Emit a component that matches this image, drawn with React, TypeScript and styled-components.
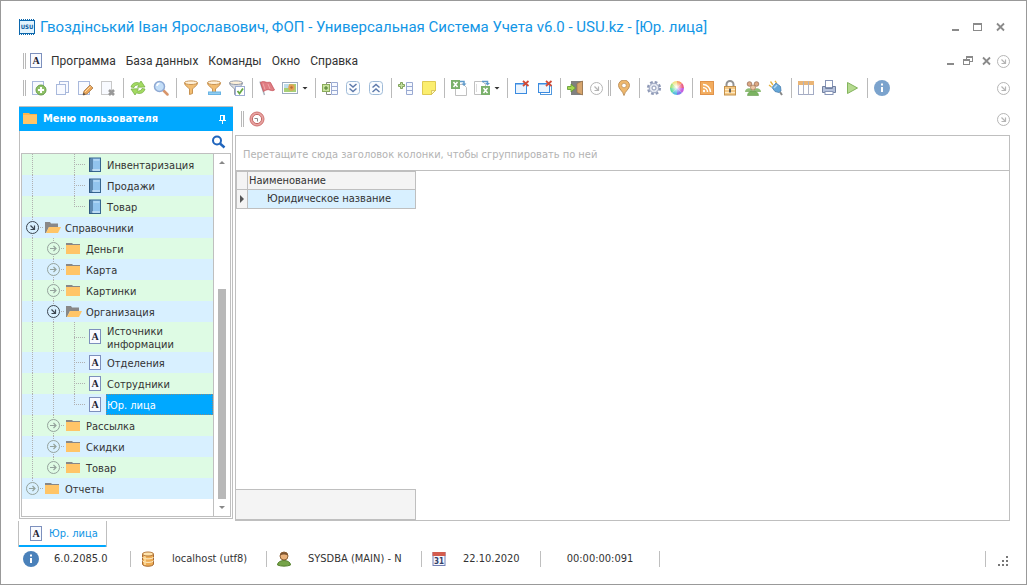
import React from "react";
import styled, { createGlobalStyle } from "styled-components";

const UI_FONT = '"DejaVu Sans Condensed", "DejaVu Sans", sans-serif';
const TITLE_FONT = 'Roboto, "Open Sans", sans-serif';
const LINE = "#bfbfbf";
const ACCENT = "#00a8ff";
const GREEN_ROW = "#defbe4";
const BLUE_ROW = "#d8f0ff";

const GlobalStyle = createGlobalStyle`
  * { box-sizing: border-box; }
  body { margin: 0; background: #fff; }
  button, input { font: inherit; color: inherit; }
`;

const Window = styled.div`
  display: flex;
  flex-direction: column;
  min-height: 100vh;
  border: 1px solid #999;
  background: #fff;
  color: #333;
  font: 11px/14px ${UI_FONT};
`;

const PlainButton = styled.button`
  display: flex;
  align-items: center;
  justify-content: center;
  flex: none;
  padding: 0;
  border: 0;
  background: none;
  cursor: pointer;
`;

/* Title bar */
const TitleBar = styled.header`
  display: flex;
  align-items: center;
  height: 48px;
  padding: 4px 21px 0 18px;
`;

const Title = styled.h1`
  flex: 1;
  min-width: 0;
  margin: 0 0 0 5px;
  overflow: hidden;
  white-space: nowrap;
  font: 400 15px/22px ${TITLE_FONT};
  color: #1296e6;
`;

const WindowButtons = styled.div<{ $gap: number }>`
  display: flex;
  align-items: center;
  gap: ${(p) => p.$gap}px;
`;

/* Menu bar */
const MenuBar = styled.nav`
  display: flex;
  align-items: center;
  height: 24px;
  padding: 0 16px 0 22px;
`;

const MenuIcon = styled.span`
  display: flex;
  margin-left: 4px;
`;

const MenuItems = styled.div`
  display: flex;
  gap: 10px;
  margin-left: 8px;
`;

const MenuItem = styled(PlainButton)`
  font: 12px/18px ${TITLE_FONT};
  color: #333;
`;

const MenuOptions = styled(PlainButton)`
  margin-left: 6px;
`;

const Grip = styled.span`
  flex: none;
  width: 3px;
  height: 16px;
  border: solid #b8b8b8;
  border-width: 0 1px;
`;

const Spacer = styled.span`
  flex: 1;
`;

/* Tool bar */
const ToolBar = styled.div`
  display: flex;
  align-items: center;
  height: 30px;
  padding: 0 16px 0 22px;
`;

const ToolSet = styled.div`
  display: flex;
  align-items: center;
  gap: 5px;
`;

const ToolList = styled.div`
  display: flex;
  align-items: center;
`;

const Tool = styled(PlainButton)`
  height: 20px;
  margin-right: 7px;

  &:last-child { margin-right: 5px; }
`;

const Separator = styled.span`
  flex: none;
  width: 1px;
  height: 20px;
  margin-right: 6px;
  background: #bababa;
`;

const Caret = styled.span`
  width: 6px;
  height: 3px;
  margin-left: 4px;
  background: #333;
  clip-path: polygon(0 0, 100% 0, 50% 100%);
`;

/* Workspace */
const Workspace = styled.div`
  display: flex;
  flex: 1;
  gap: 2px;
  margin: 3px 16px 0 18px;
`;

const Sidebar = styled.aside`
  display: flex;
  flex-direction: column;
  flex: none;
  width: 214px;
  margin-bottom: 2px;
  border: 1px solid ${LINE};
`;

const SidebarHeader = styled.div`
  display: flex;
  align-items: center;
  height: 24px;
  margin: 0 -1px;
  padding: 0 7px 0 4px;
  background: ${ACCENT};
`;

const SidebarTitle = styled.h2`
  flex: 1;
  margin: 0 0 0 6px;
  font: 700 11px/14px ${UI_FONT};
  color: #fff;
`;

const SearchRow = styled.label`
  display: flex;
  align-items: center;
  height: 22px;
  padding-right: 6px;
`;

const SearchInput = styled.input`
  flex: 1;
  min-width: 0;
  height: 20px;
  padding: 0 4px;
  border: 0;
  outline: 0;
  background: none;
`;

const TreeBox = styled.div`
  display: flex;
  flex: 1;
  margin: 0 1px 1px;
  border: 1px solid ${LINE};
`;

const Tree = styled.ul`
  flex: 1;
  min-width: 0;
  margin: 0;
  padding: 0;
  list-style: none;
`;

const TreeRow = styled.li<{ $bg: string }>`
  display: flex;
  min-height: 21px;
  background: ${(p) => p.$bg};
`;

const dots = (dir: string) => `repeating-linear-gradient(to ${dir}, #b0b0b0 0 1px, transparent 1px 2px)`;

const Guide = styled.span<{ $kind: string }>`
  display: flex;
  align-items: center;
  justify-content: center;
  flex: none;
  width: 21px;
  background-repeat: no-repeat;
  background-image: ${dots("bottom")}, ${dots("right")};
  background-position: 10px 0, 10px 50%;
  background-size: ${(p) =>
    ({
      none: "0 0, 0 0",
      line: "1px 100%, 0 0",
      branch: "1px 100%, 11px 1px",
      last: "1px 50%, 11px 1px",
    })[p.$kind]};
`;

const Expander = styled(PlainButton)<{ $bg: string }>`
  border-radius: 50%;
  background: ${(p) => p.$bg};
`;

const IconCell = styled.span<{ $folder: boolean }>`
  display: flex;
  align-items: center;
  justify-content: ${(p) => (p.$folder ? "flex-start" : "center")};
  flex: none;
  width: 21px;
  padding-left: ${(p) => (p.$folder ? 2 : 0)}px;
`;

const TreeLabel = styled.button<{ $selected?: boolean }>`
  flex: 1;
  min-width: 0;
  padding: 3px 32px 1px 1px;
  border: 0;
  outline: ${(p) => (p.$selected ? "1px dotted #8a8a80" : "0")};
  outline-offset: -1px;
  background: ${(p) => (p.$selected ? ACCENT : "none")};
  color: ${(p) => (p.$selected ? "#fff" : "#333")};
  font: 11px/13px ${UI_FONT};
  text-align: left;
  cursor: pointer;
`;

const ScrollBar = styled.div`
  display: flex;
  flex-direction: column;
  flex: none;
  width: 17px;
  border-left: 1px solid ${LINE};
`;

const ScrollButton = styled(PlainButton)<{ $down?: boolean }>`
  width: 100%;
  height: 17px;

  &::after {
    content: "";
    width: 6px;
    height: 3px;
    background: #888;
    clip-path: ${(p) => (p.$down ? "polygon(0 0, 100% 0, 50% 100%)" : "polygon(50% 0, 100% 100%, 0 100%)")};
  }
`;

const ScrollTrack = styled.div`
  display: flex;
  flex: 1;
  flex-direction: column;
  justify-content: flex-end;
  align-items: center;
`;

const ScrollThumb = styled.div`
  width: 8px;
  height: 64%;
  background: #b8b8b8;
`;

const Main = styled.main`
  display: flex;
  flex: 1;
  flex-direction: column;
  min-width: 0;
`;

const MainTools = styled.div`
  display: flex;
  align-items: center;
  gap: 5px;
  height: 29px;
  padding: 0 0 3px 6px;
`;

const GridPanel = styled.section`
  display: flex;
  flex: 1;
  flex-direction: column;
  align-items: flex-start;
  border: 1px solid ${LINE};
`;

const GroupHint = styled.div`
  align-self: stretch;
  height: 35px;
  padding: 3px 7px 0;
  border-bottom: 1px solid ${LINE};
  line-height: 32px;
  color: #b3b3b3;
`;

const DataTable = styled.table`
  width: 180px;
  border-collapse: collapse;
  table-layout: fixed;
`;

const cell = `
  height: 19px;
  padding: 0 0 0 1px;
  border: 1px solid ${LINE};
  color: #333;
  font-weight: 400;
  line-height: 14px;
  text-align: left;
`;

const HeadCell = styled.th`
  ${cell}
  height: 18px;
  background: #f4f4f4;
`;

const IndicatorCol = styled.col`
  width: 11px;
`;

const BodyCell = styled.td<{ $marker?: boolean }>`
  ${cell}
  padding-left: ${(p) => (p.$marker ? 2 : 19)}px;
  background: ${(p) => (p.$marker ? "#f4f4f4" : BLUE_ROW)};
`;

const RowMarker = styled.span`
  display: block;
  width: 4px;
  height: 8px;
  margin-left: 1px;
  background: #555;
  clip-path: polygon(0 0, 100% 50%, 0 100%);
`;

const GridFooter = styled.div`
  width: 180px;
  height: 31px;
  margin-top: auto;
  border: 1px solid ${LINE};
  border-left: 0;
  background: #f4f4f4;
`;

/* Tabs and status bar */
const Tabs = styled.div`
  display: flex;
  padding-left: 17px;
`;

const Tab = styled.button`
  display: flex;
  align-items: center;
  gap: 6px;
  height: 26px;
  padding: 0 8px 0 11px;
  border: solid ${LINE};
  border-width: 0 1px;
  background: linear-gradient(${ACCENT}, ${ACCENT}) bottom / 100% 2px no-repeat;
  color: #0f95e5;
`;

const StatusBar = styled.footer`
  display: flex;
  align-items: center;
  height: 37px;
  padding: 0 17px 13px 12px;
`;

const StatusItem = styled.div<{ $width: number; $center?: boolean }>`
  display: flex;
  align-items: center;
  justify-content: ${(p) => (p.$center ? "center" : "flex-start")};
  flex: none;
  width: ${(p) => p.$width}px;
  height: 16px;
  padding-left: ${(p) => (p.$center ? 0 : 10)}px;
  border-right: 1px solid ${LINE};
`;

const StatusIcon = styled.span`
  display: flex;
  flex: none;
  width: 31px;
`;

const SizeGrip = styled.span`
  display: flex;
  align-items: flex-end;
  height: 16px;
  padding-left: 11px;
  border-left: 1px solid ${LINE};
`;

/* Icons */
const Svg16 = ({ children, w = 16 }: { children: React.ReactNode; w?: number }) => (
  <svg width={w} height={16} viewBox={`0 0 ${w} 16`} fill="none" aria-hidden="true">
    {children}
  </svg>
);

const Page = ({ x = 1.5, y = 1.5, w = 11, h = 13, s = "#a9b9dc" }) => (
  <rect x={x} y={y} width={w} height={h} fill="#f8faff" stroke={s} />
);

const AddPage = () => (
  <Svg16>
    <Page />
    <circle cx="10" cy="10" r="5" fill="#8fc167" stroke="#6a9f4b" />
    <path d="M10 7v6M7 10h6" stroke="#fff" strokeWidth="2" />
  </Svg16>
);
const CopyPage = () => (
  <Svg16>
    <Page x={5.5} y={1.5} w={9} h={11} />
    <Page x={2.5} y={4.5} w={9} h={10} />
  </Svg16>
);
const EditPage = () => (
  <Svg16>
    <Page />
    <path d="M6 15l1-4 6-6 3 3-6 6z" fill="#e9a65a" stroke="#a87947" strokeWidth=".8" />
    <path d="M6 15l.6-2.4 1.8 1.8z" fill="#444" />
    <path d="M8 12l5.500-5.500" stroke="#ffdca8" />
  </Svg16>
);
const DeletePage = () => (
  <Svg16>
    <Page w={10} s="#c8c8c8" />
    <path d="M9 10l5 5M14 10l-5 5" stroke="#999" strokeWidth="2.600" />
  </Svg16>
);
const Refresh = () => (
  <Svg16>
    <path d="M1 7C2 3 6 1.500 9.500 3.200L11 1l4 6-7.500.300 1.500-2C7 4.600 4.500 5.200 4 7.500z" fill="#a3da62" stroke="#6fa93a" strokeWidth=".7" />
    <path d="M15 9c-1 4-5 5.500-8.500 3.800L5 15 1 9l7.500-.300-1.500 2c2 .700 4.500.100 5-2.200z" fill="#a3da62" stroke="#6fa93a" strokeWidth=".7" />
  </Svg16>
);
const Magnify = () => (
  <Svg16>
    <path d="M10.500 10.500l4 4" stroke="#d8956a" strokeWidth="2.500" strokeLinecap="round" />
    <circle cx="6.500" cy="6.500" r="5" fill="#c3def8" stroke="#8fa9d3" strokeWidth="1.500" />
    <path d="M4 6c0-1.500 1-2.500 2.500-2.500" stroke="#fff" strokeWidth="1.500" />
  </Svg16>
);
const Funnel = ({ fill = "#f3bd70", stroke = "#c89352" }) => (
  <>
    <path d="M1.500 3c0 3 4.500 4.500 5 6v5.500l3-1V9c.5-1.500 5-3 5-6z" fill={fill} stroke={stroke} />
    <ellipse cx="8" cy="2.700" rx="6.500" ry="1.800" fill="#fff1d9" stroke={stroke} />
  </>
);
const Filter = () => <Svg16><Funnel /></Svg16>;
const FilterEdit = () => (
  <Svg16>
    <Funnel />
    <rect x="2" y="11.500" width="13" height="3.500" fill="#69b4e4" />
    <path d="M3 13.200h11" stroke="#a8d9f5" />
  </Svg16>
);
const FilterCheck = () => (
  <Svg16>
    <g transform="translate(-1 0)"><Funnel fill="#d5d9e0" stroke="#9299a8" /></g>
    <rect x="6.500" y="6.500" width="9" height="9" fill="#fff" stroke="#9dadd2" />
    <path d="M8.500 11l2 2.500L14 8.500" stroke="#65a845" strokeWidth="1.800" />
  </Svg16>
);
const Flag = () => (
  <Svg16>
    <path d="M1 1.500l4.500 13.500" stroke="#aab3bd" strokeWidth="1.500" />
    <path d="M1.500 2.500c2.500-1.800 4-.500 6-.200 2 .300 3-.300 4 .200l4 7.500c-2.500 1.500-4 0-6-.300-2-.200-3.500.800-5 1.800z" fill="#df7d83" stroke="#c6555d" strokeWidth=".8" />
    <path d="M4 3.500l2 6M9 4l2 5" stroke="#f0a5a8" />
  </Svg16>
);
const Picture = () => (
  <Svg16>
    <rect x=".5" y="2.500" width="15" height="11" fill="#fff" stroke="#9dacbe" />
    <rect x="2" y="4" width="12" height="8" fill="#a8cf75" />
    <path d="M2 4h5v4H2z" fill="#bddcea" />
    <circle cx="9.500" cy="7.500" r="3.200" fill="#e2a253" />
    <circle cx="9.500" cy="7.500" r="1.200" fill="#b86b38" />
  </Svg16>
);
const SheetRows = ({ x }: { x: number }) => (
  <path d={`M${x} 2.500h6v12h-6zM${x} 6.500h6M${x} 10.500h6`} fill="#f6f9ff" stroke="#9aaad2" />
);
const ExpandColumn = () => (
  <Svg16>
    <path d="M4.500 4V2.500H9M4.500 12v2.500H9" stroke="#888" />
    <rect x=".5" y="4.500" width="7" height="7" fill="#c9e39f" stroke="#8aab5a" />
    <path d="M4 6v4M2 8h4" stroke="#4b7b2b" />
    <SheetRows x={9.5} />
  </Svg16>
);
const DoubleChevron = ({ up }: { up?: boolean }) => (
  <Svg16>
    <rect x="1.500" y="1.500" width="13" height="13" rx="3" fill="#fbfdff" stroke="#9fbbd8" />
    <path d={up ? "M4.500 7.500L8 4.500l3.500 3M4.500 12L8 9l3.500 3" : "M4.500 4L8 7l3.500-3M4.500 8.500L8 11.500l3.500-3"} stroke="#5e7aab" strokeWidth="1.500" />
  </Svg16>
);
const AddColumn = () => (
  <Svg16>
    <path d="M2.500 2.500h2v2h2v2h-2v2h-2v-2h-2v-2h2z" fill="#c4dfa0" stroke="#769b50" strokeWidth=".9" />
    <SheetRows x={8.5} />
  </Svg16>
);
const Note = () => (
  <Svg16>
    <path d="M1.500 1.500h13v9l-4 4h-9z" fill="#fbee6e" stroke="#dfca52" />
    <path d="M14.500 10.500h-4v4z" fill="#fff9bb" stroke="#cdb64a" strokeWidth=".7" />
  </Svg16>
);
const Excel = ({ x, y }: { x: number; y: number }) => (
  <g transform={`translate(${x} ${y})`}>
    <rect width="9" height="9" fill="#7ab06b" />
    <path d="M2.500 2l4 5M6.500 2l-4 5" stroke="#fff" strokeWidth="1.500" />
  </g>
);
const ExcelImport = () => (
  <Svg16>
    <path d="M4.500 4.500h8l3 3v8h-11z" fill="#fff" stroke="#c0c0c0" />
    <Excel x={0} y={0} />
    <path d="M9 1.500h4V4" stroke="#5e9acb" strokeWidth="1.500" />
    <path d="M10.500 3.500h5L13 6z" fill="#5e9acb" />
  </Svg16>
);
const ExcelExport = () => (
  <Svg16>
    <path d="M.5 1.500h8l3 3v10H.5z" fill="#fff" stroke="#c0c0c0" />
    <path d="M2.500 4v8" stroke="#ddd" />
    <Excel x={7} y={6} />
    <path d="M8 1.500h5.500V4" stroke="#5e9acb" strokeWidth="1.500" />
    <path d="M11 3h5L13.500 5.500z" fill="#5e9acb" />
  </Svg16>
);
const CloseWindow = ({ all }: { all?: boolean }) => (
  <Svg16>
    {all && <rect x="3.500" y="5.500" width="11" height="9" fill="#fff" stroke="#5299df" />}
    <rect x="1.500" y="3.500" width="11" height={all ? 9 : 10} fill="#eaf4fe" stroke="#3b8be0" />
    <path d="M1.500 4h11" stroke="#3b8be0" />
    <path d="M9 1l5.500 5M14.500 1L9 6" stroke="#cf4b38" strokeWidth="1.800" />
  </Svg16>
);
const Exit = () => (
  <Svg16>
    <rect x="4" y="1" width="12" height="14" fill="#808080" />
    <path d="M10 3.500L15.500 1v14L10 12.500z" fill="#d7a56d" stroke="#9b744c" strokeWidth=".7" />
    <path d="M.5 6.500h3.500V4l4.500 4L4 12V9.500H.5z" fill="#a5d750" stroke="#5a942d" strokeWidth=".8" />
  </Svg16>
);
const MapPin = () => (
  <Svg16>
    <path d="M8 15.500C7 11 2.500 9 2.500 5.500a5.500 5.500 0 0111 0C13.500 9 9 11 8 15.500z" fill="#efb86d" stroke="#b88b56" strokeWidth=".9" />
    <circle cx="8" cy="5.500" r="2.300" fill="#fff" stroke="#b88b56" strokeWidth=".7" />
  </Svg16>
);
const Gear = () => (
  <Svg16>
    <circle cx="8" cy="8" r="6" stroke="#8e99b6" strokeWidth="2.200" strokeDasharray="2.700 2.012" />
    <circle cx="8" cy="8" r="4.800" fill="#e3e7f0" stroke="#9ba5c0" />
    <circle cx="8" cy="8" r="2" fill="#fff" stroke="#8e99b6" />
  </Svg16>
);
const ColorWheel = () => (
  <Svg16>
    <defs>
      <radialGradient id="wheelGlow">
        <stop offset="0" stopColor="#fff" />
        <stop offset="1" stopColor="#fff" stopOpacity="0" />
      </radialGradient>
    </defs>
    {["#f58b4a", "#e9577e", "#c35de0", "#7f78ec", "#56bce0", "#58d99d", "#90dc60", "#f0dc66"].map((c, i) => (
      <path key={c} d="M8 8V1a7 7 0 014.950 2.050z" transform={`rotate(${i * 45} 8 8)`} fill={c} />
    ))}
    <circle cx="7.500" cy="7" r="6.500" fill="url(#wheelGlow)" />
  </Svg16>
);
const Rss = () => (
  <Svg16>
    <rect x="1.500" y="1.500" width="13" height="13" fill="#f2ac5e" stroke="#e0924a" />
    <circle cx="5" cy="11" r="1.200" fill="#fff" />
    <path d="M4 7.500A4.500 4.500 0 018.500 12M4 4.500a7.500 7.500 0 017.500 7.500" stroke="#fff" strokeWidth="1.500" />
  </Svg16>
);
const Lock = () => (
  <Svg16>
    <path d="M4.500 8V4.500a3.500 3.500 0 017 0V8" stroke="#929292" strokeWidth="2" />
    <rect x="2.500" y="6.500" width="11" height="8.500" fill="#f6c984" stroke="#c3914d" />
    <path d="M3 9.500h10M3 12.500h10" stroke="#ffebc6" />
    <path d="M8 8.500v4" stroke="#555" strokeWidth="1.800" />
  </Svg16>
);
const Users = () => (
  <Svg16>
    <path d="M0 12c0-5 8-5 8 0zM8 12c0-5 8-5 8 0z" fill="#8fbd77" />
    <circle cx="4.500" cy="4" r="2.300" fill="#dda983" stroke="#9a7059" strokeWidth=".8" />
    <circle cx="11.500" cy="4" r="2.300" fill="#dda983" stroke="#9a7059" strokeWidth=".8" />
    <path d="M2.500 15.500c0-6 11-6 11 0z" fill="#7bb361" stroke="#649b4d" strokeWidth=".6" />
    <circle cx="8" cy="7.500" r="2.500" fill="#ecc6a4" stroke="#a77a5c" strokeWidth=".8" />
  </Svg16>
);
const Plug = () => (
  <Svg16>
    <path d="M5 5L2.500 1.500M8.500 3L7 .8M3.500 7L1 5" stroke="#e5b23e" strokeWidth="1.300" />
    <path d="M4 7.500L8 3l4.500 3.500.5 4.500-2 1.500-4-1z" fill="#65a7d8" stroke="#477dae" strokeWidth=".8" />
    <path d="M6 8l3-3" stroke="#b3daf6" strokeWidth="1.500" />
    <path d="M12 12l2 3" stroke="#888" strokeWidth="2" />
  </Svg16>
);
const TableIcon = () => (
  <Svg16>
    <rect x=".5" y="1.500" width="15" height="13" fill="#fff" stroke="#a3abc4" />
    <rect x="0" y="1" width="16" height="4" fill="#eab576" />
    <path d="M5.500 1.500v13M10.500 1.500v13" stroke="#b0b4c4" />
  </Svg16>
);
const Printer = () => (
  <Svg16>
    <rect x="4.500" y=".5" width="7" height="7" fill="#fff" stroke="#8795b7" />
    <path d="M1.500 6.500h3v2h7v-2h3v6h-13z" fill="#b6c2dc" stroke="#71809f" />
    <rect x="4" y="11.500" width="8" height="3" fill="#fff" stroke="#8795b7" />
  </Svg16>
);
const Play = () => (
  <Svg16>
    <path d="M3.500 2.500L13.500 8l-10 5.500z" fill="#b5da8f" stroke="#83b45d" strokeLinejoin="round" />
  </Svg16>
);
const Info = ({ color }: { color: string }) => (
  <Svg16>
    <circle cx="8" cy="8" r="8" fill={color} />
    <path d="M7 3.500h2v2H7zM7 7h2v5H7z" fill="#fff" />
  </Svg16>
);
const ArrowCircle = ({ color = "#b5b5b5", right = false }) => (
  <svg width="13" height="13" viewBox="0 0 13 13" fill="none" stroke={color} aria-hidden="true">
    <circle cx="6.500" cy="6.500" r="6" />
    <path d={right ? "M3 6.500h6M6.500 4L9 6.500 6.500 9" : "M4.500 4.500l4 4M8.500 4.500v4h-4"} strokeWidth="1.200" />
  </svg>
);
const DocA = () => (
  <svg width="13" height="16" viewBox="0 0 13 16" fill="none" aria-hidden="true">
    <rect x=".5" y=".5" width="11" height="14" fill="#f8faff" stroke="#7d90bd" />
    <text x="6" y="11" textAnchor="middle" fontFamily='"Liberation Serif", serif' fontWeight="700" fontSize="10" fill="#223">A</text>
  </svg>
);
const Book = () => (
  <svg width="13" height="16" viewBox="0 0 13 16" fill="none" aria-hidden="true">
    <rect x=".5" y="1" width="11" height="13.500" fill="#92c4ee" stroke="#37658f" />
    <path d="M1 1v13.500M3 1.500v13" stroke="#294e75" />
    <path d="M4.500 3h6" stroke="#c8e4fb" />
    <path d="M3 13h8" stroke="#e6f2fc" />
  </svg>
);
const Folder = ({ open, tab = "#888" }: { open?: boolean; tab?: string }) => (
  <svg width={open ? 16 : 14} height="12" viewBox={open ? "0 0 16 12" : "0 0 14 12"} aria-hidden="true">
    {open ? (
      <>
        <path d="M0 0h5l1 1.500h7V5H4l-3 6H0z" fill="#888" />
        <path d="M4 5h12l-3 6H1z" fill="#ffc568" />
      </>
    ) : (
      <>
        <path d="M0 0h6l1 1h7v2H0z" fill={tab} />
        <rect y="2" width="14" height="9" fill="#ffc568" />
      </>
    )}
  </svg>
);
const Logo = () => (
  <svg width="16" height="16" viewBox="0 0 16 16" aria-hidden="true">
    <rect width="16" height="16" fill="#0b67ad" />
    <rect x="1" y="2" width="14" height="12" fill="#e4f4fd" />
    <path d="M1 .5h15M1 15.500h15" stroke="#fff" strokeDasharray="1 1" />
    <text x="8" y="10" textAnchor="middle" fontFamily='"DejaVu Sans Condensed", sans-serif' fontWeight="700" fontSize="6" fill="#0b5ca0">USU</text>
  </svg>
);
const Glyph = ({ d, w = 7 }: { d: string; w?: number }) => (
  <svg width={w} height="10" viewBox={`0 0 ${w} 10`} fill="#8a8a8a" fillRule="evenodd" aria-hidden="true">
    <path d={d} />
  </svg>
);
const Minimize = () => <Glyph d="M0 7h7v2H0z" />;
const CloseGlyph = () => (
  <svg width="9" height="10" viewBox="0 0 9 10" stroke="#8a8a8a" strokeWidth="1.800" aria-hidden="true">
    <path d="M1 1.500l7 7M8 1.500l-7 7" />
  </svg>
);
const Pin = () => (
  <svg width="7" height="9" viewBox="0 0 7 9" fill="#fff" aria-hidden="true">
    <path d="M1 0h5v5h1v1H4v3H3V6H0V5h1zM2 1v4h2V1z" fillRule="evenodd" />
  </svg>
);
const SearchGlyph = () => (
  <svg width="14" height="14" viewBox="0 0 14 14" fill="none" stroke="#2065bd" aria-hidden="true">
    <circle cx="5" cy="5.500" r="4" strokeWidth="2" />
    <path d="M8 8.500l4.500 4" strokeWidth="2.500" />
  </svg>
);
const ClockIcon = () => (
  <Svg16>
    <circle cx="8" cy="8" r="7" fill="#e8a4a2" stroke="#cf7371" />
    <circle cx="8" cy="8" r="4.600" fill="#fff" stroke="#c56765" />
    <path d="M5.500 7.500h3v3" stroke="#888" />
  </Svg16>
);
const Database = () => (
  <Svg16 w={14}>
    <path d="M1.500 3v10c0 3 11 3 11 0V3z" fill="#edac54" stroke="#a96c34" />
    <path d="M1.500 6c0 2.500 11 2.500 11 0M1.500 9.500c0 2.500 11 2.500 11 0" stroke="#fff0cd" />
    <path d="M4 4v10" stroke="#ffe1a0" strokeWidth="1.500" />
    <ellipse cx="7" cy="3" rx="5.500" ry="2" fill="#ffe4ad" stroke="#b6793d" />
  </Svg16>
);
const User = () => (
  <Svg16 w={14}>
    <path d="M.5 14c0-6 13-6 13 0-3 1.500-10 1.500-13 0z" fill="#76a449" stroke="#55802e" />
    <circle cx="7" cy="5" r="4" fill="#eab27b" stroke="#8d6136" />
    <path d="M3 4.500C3 0 11 0 11 4.500 8.500 4 7 2.800 3 4.500z" fill="#7d5430" />
  </Svg16>
);
const Calendar = () => (
  <Svg16 w={14}>
    <rect x="1" y="1.500" width="12" height="13" fill="#f6f8ff" stroke="#7280b5" />
    <rect x=".5" y="1" width="13" height="4" fill="#d35c4e" />
    <text x="7" y="12.500" textAnchor="middle" fontFamily='"DejaVu Sans Condensed", sans-serif' fontWeight="700" fontSize="8" fill="#344067">31</text>
  </Svg16>
);
const GripDots = () => (
  <svg width="12" height="12" viewBox="0 0 12 12" fill="#777" aria-hidden="true">
    <path d="M9 1h2v2H9zM5 5h2v2H5zM9 5h2v2H9zM1 9h2v2H1zM5 9h2v2H5zM9 9h2v2H9z" />
  </svg>
);

type ToolDef = [string, React.ReactNode, boolean?];

const toolGroups: ToolDef[][] = [
  [["Добавить", <AddPage />], ["Копировать", <CopyPage />], ["Изменить", <EditPage />], ["Удалить", <DeletePage />]],
  [["Обновить", <Refresh />], ["Поиск", <Magnify />]],
  [["Фильтр", <Filter />], ["Строка фильтра", <FilterEdit />], ["Условия фильтра", <FilterCheck />]],
  [["Флаг", <Flag />], ["Картинка", <Picture />, true]],
  [["Развернуть колонки", <ExpandColumn />], ["Развернуть все", <DoubleChevron />], ["Свернуть все", <DoubleChevron up />]],
  [["Добавить колонку", <AddColumn />], ["Заметка", <Note />]],
  [["Импорт", <ExcelImport />], ["Экспорт", <ExcelExport />, true]],
  [["Закрыть окно", <CloseWindow />], ["Закрыть все окна", <CloseWindow all />]],
  [["Выход", <Exit />], ["Настроить панель", <ArrowCircle />]],
];

const serviceGroups: ToolDef[][] = [
  [["Карта", <MapPin />]],
  [["Настройки", <Gear />], ["Цвета", <ColorWheel />]],
  [["Новости", <Rss />], ["Блокировка", <Lock />], ["Пользователи", <Users />], ["Подключение", <Plug />]],
  [["Таблица", <TableIcon />], ["Печать", <Printer />], ["Запуск", <Play />]],
  [["О программе", <Info color="#7ba3cd" />]],
];

const Tools = ({ groups }: { groups: ToolDef[][] }) => (
  <ToolSet>
    <Grip />
    <ToolList>
      {groups.map((group, i) => (
        <React.Fragment key={i}>
          {i > 0 && <Separator />}
          {group.map(([label, icon, menu]) => (
            <Tool key={label} type="button" aria-label={label}>
              {icon}
              {menu && <Caret />}
            </Tool>
          ))}
        </React.Fragment>
      ))}
    </ToolList>
  </ToolSet>
);

interface Node {
  label: string;
  guides: string[];
  kind: "folder" | "doc" | "book";
  open?: boolean;
  selected?: boolean;
}

const nodes: Node[] = [
  { label: "Инвентаризация", guides: ["line", "none", "branch"], kind: "book" },
  { label: "Продажи", guides: ["line", "none", "branch"], kind: "book" },
  { label: "Товар", guides: ["line", "none", "last"], kind: "book" },
  { label: "Справочники", guides: ["branch"], kind: "folder", open: true },
  { label: "Деньги", guides: ["line", "branch"], kind: "folder" },
  { label: "Карта", guides: ["line", "branch"], kind: "folder" },
  { label: "Картинки", guides: ["line", "branch"], kind: "folder" },
  { label: "Организация", guides: ["line", "branch"], kind: "folder", open: true },
  { label: "Источники информации", guides: ["line", "line", "branch"], kind: "doc" },
  { label: "Отделения", guides: ["line", "line", "branch"], kind: "doc" },
  { label: "Сотрудники", guides: ["line", "line", "branch"], kind: "doc" },
  { label: "Юр. лица", guides: ["line", "line", "last"], kind: "doc", selected: true },
  { label: "Рассылка", guides: ["line", "branch"], kind: "folder" },
  { label: "Скидки", guides: ["line", "branch"], kind: "folder" },
  { label: "Товар", guides: ["line", "last"], kind: "folder" },
  { label: "Отчеты", guides: ["last"], kind: "folder" },
];

const TreeItem = ({ node, bg }: { node: Node; bg: string }) => (
  <TreeRow $bg={bg}>
    {node.guides.map((kind, i) => (
      <Guide key={i} $kind={kind}>
        {node.kind === "folder" && i === node.guides.length - 1 && (
          <Expander type="button" $bg={bg} aria-label={node.open ? "Свернуть" : "Развернуть"}>
            <ArrowCircle color={node.open ? "#3c4650" : "#94a29c"} right={!node.open} />
          </Expander>
        )}
      </Guide>
    ))}
    <IconCell $folder={node.kind === "folder"}>
      {node.kind === "folder" ? <Folder open={node.open} /> : node.kind === "book" ? <Book /> : <DocA />}
    </IconCell>
    <TreeLabel type="button" $selected={node.selected}>{node.label}</TreeLabel>
  </TreeRow>
);

const menu = ["Программа", "База данных", "Команды", "Окно", "Справка"];

export default function App() {
  return (
    <Window>
      <GlobalStyle />
      <TitleBar>
        <Logo />
        <Title>Гвоздінський Іван Ярославович, ФОП - Универсальная Система Учета v6.0 - USU.kz - [Юр. лица]</Title>
        <WindowButtons $gap={14}>
          <PlainButton type="button" aria-label="Свернуть"><Minimize /></PlainButton>
          <PlainButton type="button" aria-label="Развернуть"><Glyph w={9} d="M0 1h9v8H0zM1 3v5h7V3z" /></PlainButton>
          <PlainButton type="button" aria-label="Закрыть"><CloseGlyph /></PlainButton>
        </WindowButtons>
      </TitleBar>

      <MenuBar>
        <Grip />
        <MenuIcon><DocA /></MenuIcon>
        <MenuItems>
          {menu.map((item) => (
            <MenuItem key={item} type="button">{item}</MenuItem>
          ))}
        </MenuItems>
        <Spacer />
        <WindowButtons $gap={9}>
          <PlainButton type="button" aria-label="Свернуть окно"><Minimize /></PlainButton>
          <PlainButton type="button" aria-label="Восстановить окно">
            <Glyph w={10} d="M3 0h7v6H7v3H0V3h3zM4 2v1h3v2h2V2zM1 5v3h5V5z" />
          </PlainButton>
          <PlainButton type="button" aria-label="Закрыть окно"><CloseGlyph /></PlainButton>
        </WindowButtons>
        <MenuOptions type="button" aria-label="Настроить меню"><ArrowCircle /></MenuOptions>
      </MenuBar>

      <ToolBar>
        <Tools groups={toolGroups} />
        <Tools groups={serviceGroups} />
        <Spacer />
        <PlainButton type="button" aria-label="Настроить панель"><ArrowCircle /></PlainButton>
      </ToolBar>

      <Workspace>
        <Sidebar>
          <SidebarHeader>
            <Folder tab="#ffb347" />
            <SidebarTitle>Меню пользователя</SidebarTitle>
            <PlainButton type="button" aria-label="Закрепить"><Pin /></PlainButton>
          </SidebarHeader>
          <SearchRow>
            <SearchInput type="text" aria-label="Поиск по меню" />
            <SearchGlyph />
          </SearchRow>
          <TreeBox>
            <Tree>
              {nodes.map((node, i) => (
                <TreeItem key={i} node={node} bg={i % 2 ? BLUE_ROW : GREEN_ROW} />
              ))}
            </Tree>
            <ScrollBar>
              <ScrollButton type="button" aria-label="Прокрутить вверх" />
              <ScrollTrack><ScrollThumb /></ScrollTrack>
              <ScrollButton type="button" aria-label="Прокрутить вниз" $down />
            </ScrollBar>
          </TreeBox>
        </Sidebar>

        <Main>
          <MainTools>
            <Grip />
            <PlainButton type="button" aria-label="История"><ClockIcon /></PlainButton>
            <Spacer />
            <PlainButton type="button" aria-label="Настроить панель"><ArrowCircle /></PlainButton>
          </MainTools>
          <GridPanel>
            <GroupHint>Перетащите сюда заголовок колонки, чтобы сгруппировать по ней</GroupHint>
            <DataTable>
              <colgroup>
                <IndicatorCol />
                <col />
              </colgroup>
              <thead>
                <tr>
                  <HeadCell aria-label="Текущая строка" />
                  <HeadCell>Наименование</HeadCell>
                </tr>
              </thead>
              <tbody>
                <tr>
                  <BodyCell $marker><RowMarker /></BodyCell>
                  <BodyCell>Юридическое название</BodyCell>
                </tr>
              </tbody>
            </DataTable>
            <GridFooter />
          </GridPanel>
        </Main>
      </Workspace>

      <Tabs>
        <Tab type="button"><DocA />Юр. лица</Tab>
      </Tabs>

      <StatusBar>
        <StatusItem $width={118}><StatusIcon><Info color="#4a81ba" /></StatusIcon>6.0.2085.0</StatusItem>
        <StatusItem $width={136}><StatusIcon><Database /></StatusIcon>localhost (utf8)</StatusItem>
        <StatusItem $width={155}><StatusIcon><User /></StatusIcon>SYSDBA (MAIN) - N</StatusItem>
        <StatusItem $width={119}><StatusIcon><Calendar /></StatusIcon>22.10.2020</StatusItem>
        <StatusItem $width={119} $center>00:00:00:091</StatusItem>
        <Spacer />
        <SizeGrip><GripDots /></SizeGrip>
      </StatusBar>
    </Window>
  );
}
